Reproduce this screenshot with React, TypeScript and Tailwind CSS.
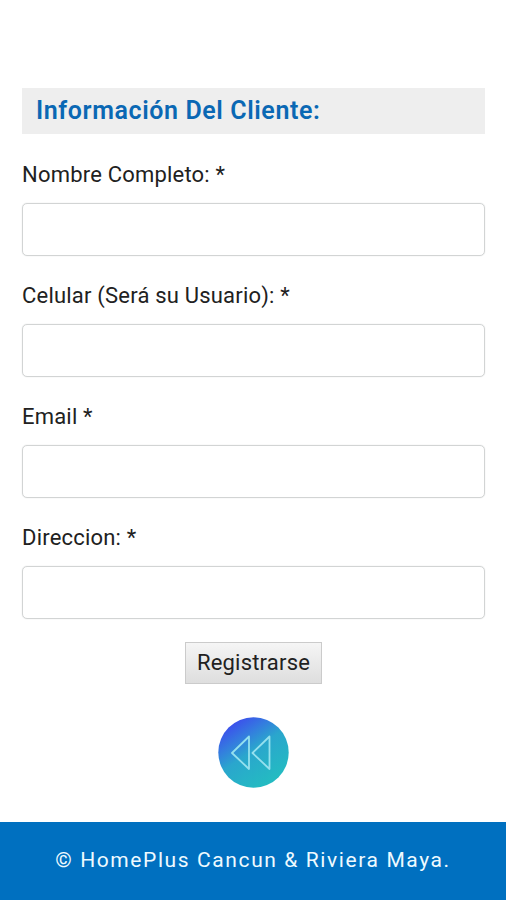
const fields = [
  { name: "nombre", label: "Nombre Completo: *" },
  { name: "celular", label: "Celular (Será su Usuario): *" },
  { name: "email", label: "Email *" },
  { name: "direccion", label: "Direccion: *" },
];

const BackIcon = () => (
  <svg viewBox="0 0 71 71" className="w-[71px] h-[71px]" fill="none">
    <defs>
      <linearGradient id="circle" x1="12" y1="8" x2="50" y2="64" gradientUnits="userSpaceOnUse">
        <stop offset="0" stopColor="#3c50ec" />
        <stop offset="0.25" stopColor="#347bdf" />
        <stop offset="0.5" stopColor="#2aa6cd" />
        <stop offset="1" stopColor="#24bac2" />
      </linearGradient>
    </defs>
    <circle cx="35.5" cy="35.5" r="35.2" fill="url(#circle)" />
    <path d="M31 19.5 L14 36 L31 52 Z M51.5 19.5 L34.5 36 L51.5 52 Z" stroke="#94e0ee" strokeWidth="1.8" strokeLinejoin="round" />
  </svg>
);

const App = () => {
  return (
    <div className="h-screen flex flex-col bg-white text-[#212121] font-[Roboto,sans-serif]">
      <form className="flex-1 pl-[22px] pr-[21px] pt-[88px] flex flex-col" onSubmit={(e) => e.preventDefault()}>
        <h1 className="h-[46px] px-[14px] bg-[#eeeeee] text-[#0a68b4] font-semibold text-[25px] leading-[46px] tracking-[0.6px]">
          Información Del Cliente:
        </h1>
        <div className="pt-[24px]">
          {fields.map((field) => (
            <div key={field.name} className="h-[121px]">
              <label htmlFor={field.name} className="block h-[45px] text-[22px] leading-[34px] tracking-[0.2px]">
                {field.label}
              </label>
              <input id={field.name} type="text" className="block w-full h-[53px] border border-[#d2d4d4] rounded-[5px] px-3 outline-none shadow-[0_0_1px_#c8cccc]" />
            </div>
          ))}
        </div>
        <button className="self-center w-[137px] h-[42px] border border-[#cbcbcb] bg-linear-to-b from-[#f5f5f5] to-[#dedede] text-[22px] leading-[40px] tracking-[0.2px]">
          Registrarse
        </button>
        <a href="#" className="self-center mt-[33px]">
          <BackIcon />
        </a>
      </form>
      <footer className="h-[78px] bg-[#0070c0] text-[#eefaff] text-center text-[21px] leading-[76px] tracking-[1.6px]">
        © HomePlus Cancun & Riviera Maya.
      </footer>
    </div>
  );
};

export default App;
